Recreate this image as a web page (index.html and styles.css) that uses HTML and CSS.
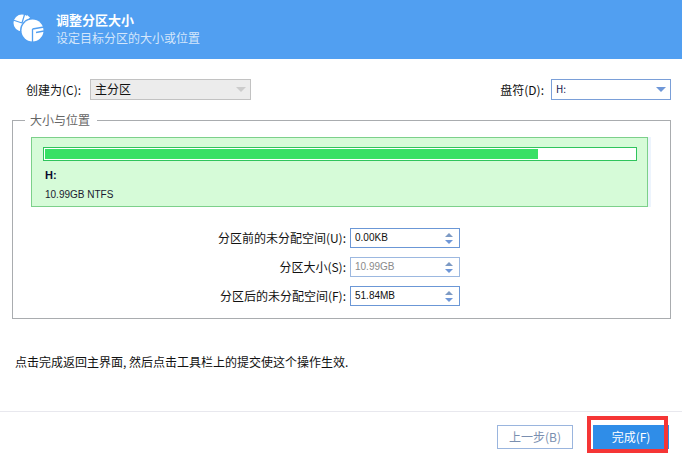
FILE: index.html
```html
<!DOCTYPE html>
<html lang="zh">
<head>
<meta charset="utf-8">
<title>调整分区大小</title>
<link rel="stylesheet" href="styles.css">
</head>
<body>
<div class="app">
  <header class="header">
    <svg class="logo" width="32" height="32" viewBox="12 12 32 32">
      <circle cx="22" cy="23" r="8.5" fill="#fff"/>
      <path d="M22 23 L25 13 M22 23 L13 20" stroke="#519ff1" stroke-width="1.2" fill="none"/>
      <path d="M27 15 L30 17.5 L27.5 20 L25.5 18Z" fill="#fff"/>
      <circle cx="32.5" cy="30.5" r="12.5" fill="#519ff1"/>
      <circle cx="32.5" cy="30.5" r="11" fill="#fff"/>
      <path d="M32.5 29 L32.5 42 M32.5 29 L44 27" stroke="#519ff1" stroke-width="1.3" fill="none"/>
      <path d="M36 32.5 L44 31" stroke="#519ff1" stroke-width="1.3" fill="none"/>
    </svg>
    <div class="titles">
      <div class="title">调整分区大小</div>
      <div class="subtitle">设定目标分区的大小或位置</div>
    </div>
  </header>
  <main class="content">
    <div class="toprow">
      <div class="field">
        <span class="label">创建为(C):</span>
        <div class="combo combo-main">主分区<span class="arrow arrow-grey"></span></div>
      </div>
      <div class="field">
        <span class="label">盘符(D):</span>
        <div class="combo combo-drive">H:<span class="arrow arrow-blue"></span></div>
      </div>
    </div>
    <fieldset class="group">
      <legend class="legend">大小与位置</legend>
      <div class="partition">
        <div class="bar"><div class="bar-fill"></div></div>
        <div class="pname">H:</div>
        <div class="pinfo">10.99GB NTFS</div>
      </div>
      <div class="spins">
        <div class="spinrow">
          <span class="label">分区前的未分配空间(U):</span>
          <div class="spin"><span>0.00KB</span><span class="steppers"><i class="up"></i><i class="down"></i></span></div>
        </div>
        <div class="spinrow">
          <span class="label">分区大小(S):</span>
          <div class="spin spin-dim"><span>10.99GB</span><span class="steppers"><i class="up"></i><i class="down"></i></span></div>
        </div>
        <div class="spinrow">
          <span class="label">分区后的未分配空间(F):</span>
          <div class="spin"><span>51.84MB</span><span class="steppers"><i class="up"></i><i class="down"></i></span></div>
        </div>
      </div>
    </fieldset>
    <p class="note">点击完成返回主界面, 然后点击工具栏上的提交使这个操作生效.</p>
  </main>
  <footer class="footer">
    <button class="btn btn-back">上一步(B)</button>
    <button class="btn btn-done">完成(F)</button>
    <div class="highlight"></div>
  </footer>
</div>
</body>
</html>
```
FILE: styles.css
```css
* { box-sizing: border-box; }
html, body { margin: 0; padding: 0; }
body { width: 682px; height: 457px; overflow: hidden; background: #fff; font: 12px/14px "Noto Sans CJK SC", "Liberation Sans", sans-serif; color: #111; }
.app { display: flex; flex-direction: column; height: 457px; }
.header { height: 59px; background: #519ff1; display: flex; align-items: flex-start; padding: 12px 0 0 12px; flex: none; }
.logo { flex: none; }
.titles { margin-left: 12px; margin-top: 0; }
.title { color: #fff; font-size: 13px; font-weight: 700; line-height: 15px; }
.subtitle { color: #d4e6fb; font-size: 12px; line-height: 15px; margin-top: 3px; }
.content { flex: 1; padding: 20px 11px 0 12px; }
.toprow { display: flex; justify-content: space-between; height: 21px; padding: 0 0 0 14px; }
.field { display: flex; align-items: center; }
.label { white-space: nowrap; }
.combo { position: relative; height: 21px; line-height: 18px; padding-left: 4px; }
.combo-main { width: 161px; margin-left: 9px; background: #ececec; border: 1px solid #c2c2c2; }
.combo-drive { width: 120px; margin-left: 7px; border: 1px solid #7a9fd8; font-size: 10px; color: #1a1a50; }
.arrow { position: absolute; right: 4px; top: 7px; width: 0; height: 0; border-left: 5px solid transparent; border-right: 5px solid transparent; border-top: 5px solid #ccc; }
.arrow-blue { border-top-color: #6f97d8; }
.group { margin: 13px 0 0 0; padding: 0; border: 1px solid #a9acaf; height: 206px; position: relative; }
.legend { margin-left: 12px; padding: 0 7px 0 5px; color: #666; line-height: 14px; }
.partition { margin: 10px 0 0 18px; width: 617px; height: 70px; background: #d6fbd8; border: 1px solid #7cd08a; padding: 9px 10px 0 11px; box-shadow: 3px 0 0 #edf4fd; }
.bar { height: 14px; background: #fff; border: 1px solid #2fc45c; padding: 1px; }
.bar-fill { height: 100%; width: 83.6%; background: #38e065; }
.pname { font-weight: 700; font-size: 11px; line-height: 13px; margin: 8px 0 0 2px; font-family: "Liberation Sans", sans-serif; color: #0a0a30; }
.pinfo { font-size: 10px; line-height: 13px; margin: 6px 0 0 2px; color: #1a1a30; font-family: "Liberation Sans", sans-serif; }
.spins { margin-top: 21px; display: flex; flex-direction: column; gap: 9px; padding-right: 210px; }
.spinrow { display: flex; justify-content: flex-end; align-items: center; height: 20px; }
.spin { width: 110px; height: 20px; border: 1px solid #6b97d6; margin-left: 4px; display: flex; align-items: center; justify-content: space-between; padding: 0 5px 0 4px; font-size: 10px; font-family: "Liberation Sans", sans-serif; color: #111; }
.spin-dim { color: #8a8a8a; border-color: #9cb8e0; }
.steppers { display: flex; flex-direction: column; gap: 3px; margin-right: 1px; }
.steppers i { display: block; width: 0; height: 0; border-left: 4px solid transparent; border-right: 4px solid transparent; }
.steppers .up { border-bottom: 4px solid #7d9ac4; }
.steppers .down { border-top: 4px solid #6f97d8; }
.note { margin: 36px 0 0 3px; line-height: 14px; color: #111; }
.footer { position: relative; height: 46px; flex: none; border-top: 1px solid #e8e8ee; display: flex; justify-content: flex-end; padding: 13px 13px 0 0; gap: 20px; }
.btn { height: 24px; width: 76px; font: 12px/14px "Noto Sans CJK SC", "Liberation Sans", sans-serif; padding: 0; }
.btn-back { background: #fff; border: 1px solid #9ab5de; color: #7a8fb0; }
.btn-done { background: #2f8de8; border: 0; color: #fff; }
.highlight { position: absolute; left: 587px; top: 4px; width: 81px; height: 37px; border: 4px solid #f53535; }
```
